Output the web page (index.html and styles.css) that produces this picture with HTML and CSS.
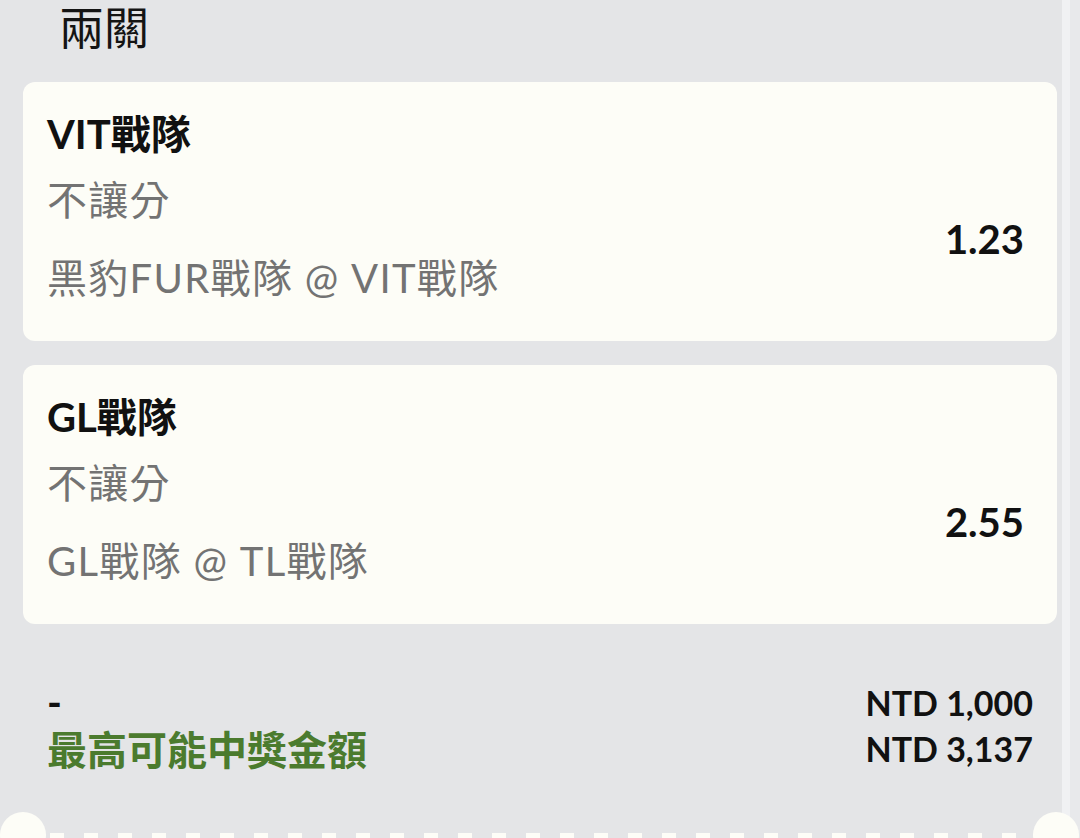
FILE: index.html
```html
<!DOCTYPE html>
<html lang="zh-Hant">
<head>
<meta charset="UTF-8">
<meta name="viewport" content="width=device-width, initial-scale=1.0">
<title>兩關</title>
<link rel="stylesheet" href="styles.css">
</head>
<body>
<div class="slip">
    <h1 class="slip-title">兩關</h1>

    <div class="legs">
        <div class="leg">
            <div class="leg-pick">VIT戰隊</div>
            <div class="leg-body">
                <div class="leg-info">
                    <div class="leg-market">不讓分</div>
                    <div class="leg-match">黑豹FUR戰隊 @ VIT戰隊</div>
                </div>
                <div class="leg-odds">1.23</div>
            </div>
        </div>

        <div class="leg">
            <div class="leg-pick">GL戰隊</div>
            <div class="leg-body">
                <div class="leg-info">
                    <div class="leg-market">不讓分</div>
                    <div class="leg-match">GL戰隊 @ TL戰隊</div>
                </div>
                <div class="leg-odds">2.55</div>
            </div>
        </div>
    </div>

    <div class="summary">
        <div class="summary-row">
            <span class="summary-label">-</span>
            <span class="summary-value">NTD 1,000</span>
        </div>
        <div class="summary-row">
            <span class="summary-label win">最高可能中獎金額</span>
            <span class="summary-value">NTD 3,137</span>
        </div>
    </div>

    <div class="tear">
        <div class="notch"></div>
        <div class="dashes"></div>
        <div class="notch"></div>
    </div>
</div>
</body>
</html>
```

FILE: styles.css
```css
* {
    padding: 0;
    margin: 0;
    box-sizing: border-box;
}
body {
    width: 1080px;
    height: 838px;
    overflow: hidden;
    font-family: Lato, "Noto Sans CJK TC", sans-serif;
    color: #111;
    background: linear-gradient(to right,
        #e4e5e7 1062px,
        #f0f1f3 1062px,
        #f0f1f3 1070px,
        #e8e9eb 1070px);
}
.slip {
    display: flex;
    flex-direction: column;
}
.slip-title {
    padding: 3px 0 0 59px;
    height: 82px;
    line-height: 46px;
    font-family: "Noto Sans CJK TC", sans-serif;
    font-size: 45px;
    font-weight: 400;
    color: #141414;
}
.legs {
    display: flex;
    flex-direction: column;
    gap: 24px;
    margin-left: 23px;
    width: 1034px;
}
.leg {
    background-color: #fdfdf7;
    border-radius: 12px;
    padding: 27px 33px 38px 24px;
}
.leg-pick {
    font-size: 40px;
    font-weight: bold;
    line-height: 50px;
    color: #111;
}
.leg-body {
    display: flex;
    justify-content: space-between;
    align-items: center;
    margin-top: 16px;
}
.leg-info {
    display: flex;
    flex-direction: column;
    gap: 28px;
    font-size: 40px;
    line-height: 50px;
    letter-spacing: 1.3px;
    color: #737373;
}
.leg-odds {
    font-size: 40px;
    font-weight: bold;
    color: #111;
}
.summary {
    margin: 55px 0 0 23px;
    width: 1034px;
    padding: 0 24px;
}
.summary-row {
    display: flex;
    justify-content: space-between;
    align-items: center;
    height: 46px;
    font-size: 40px;
    font-weight: bold;
}
.summary-value {
    font-size: 34px;
}
.summary-label.win {
    color: #4b7b2e;
}
.tear {
    display: flex;
    align-items: flex-start;
    margin-top: 41px;
    padding-right: 1px;
}
.notch {
    width: 46px;
    height: 46px;
    flex-shrink: 0;
    border-radius: 50%;
    background-color: #fdfdf7;
}
.dashes {
    flex: 1;
    height: 6px;
    margin: 21px 3px 0 4px;
    background: repeating-linear-gradient(to right,
        #fdfdf7 0 14px,
        transparent 14px 34px);
}
```
